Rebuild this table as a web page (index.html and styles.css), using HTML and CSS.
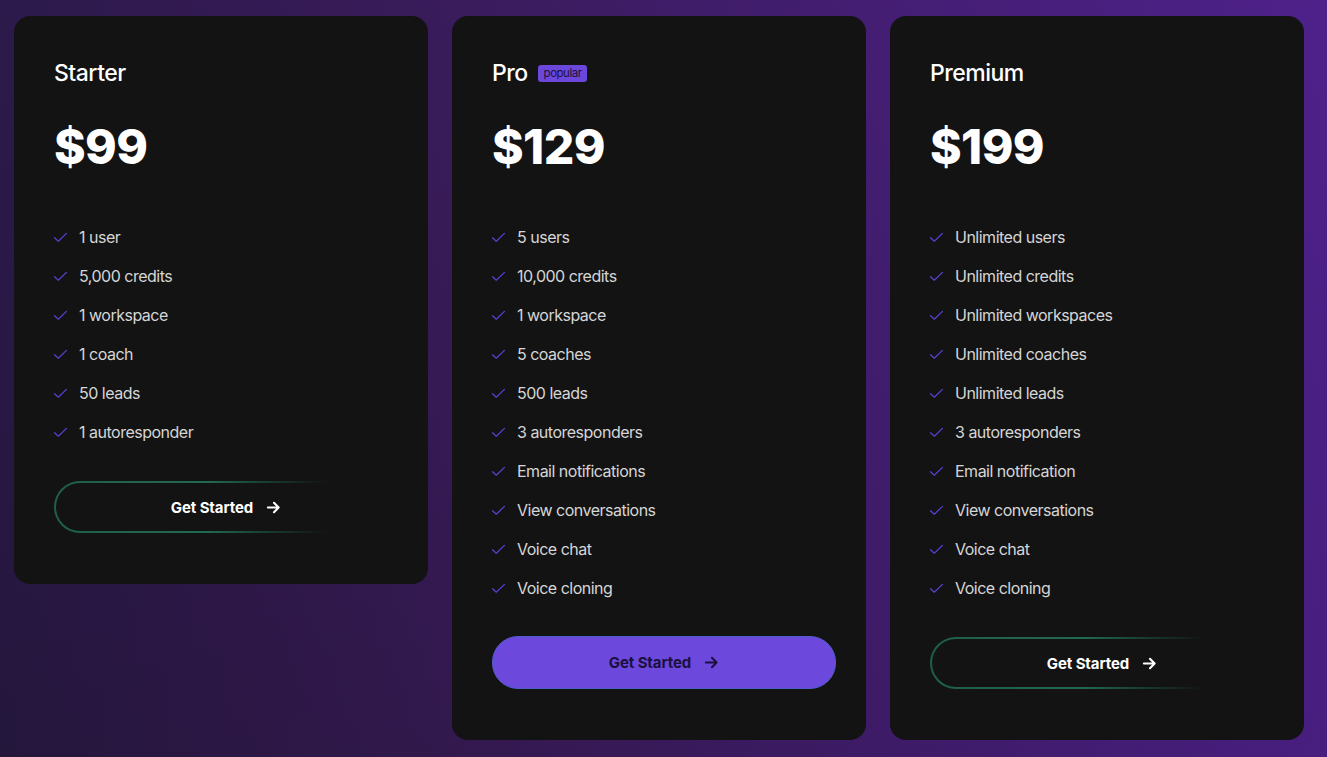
FILE: index.html
```html
<!DOCTYPE html>
<html lang="en">
<head>
<meta charset="utf-8">
<title>Pricing</title>
<link rel="stylesheet" href="styles.css">
</head>
<body>
<main class="pricing">
  <section class="card">
    <h2 class="plan">Starter</h2>
    <div class="price">$99</div>
    <ul class="features">
      <li><svg class="check" viewBox="0 0 16 12"><path d="M1.5 6.2 L5.6 10 L14.5 1.5"/></svg>1 user</li>
      <li><svg class="check" viewBox="0 0 16 12"><path d="M1.5 6.2 L5.6 10 L14.5 1.5"/></svg>5,000 credits</li>
      <li><svg class="check" viewBox="0 0 16 12"><path d="M1.5 6.2 L5.6 10 L14.5 1.5"/></svg>1 workspace</li>
      <li><svg class="check" viewBox="0 0 16 12"><path d="M1.5 6.2 L5.6 10 L14.5 1.5"/></svg>1 coach</li>
      <li><svg class="check" viewBox="0 0 16 12"><path d="M1.5 6.2 L5.6 10 L14.5 1.5"/></svg>50 leads</li>
      <li><svg class="check" viewBox="0 0 16 12"><path d="M1.5 6.2 L5.6 10 L14.5 1.5"/></svg>1 autoresponder</li>
    </ul>
    <a class="btn btn-outline" href="#">Get Started<svg class="arrow" viewBox="0 0 16 16"><path d="M2 8 H13.5 M8.5 3 L13.5 8 L8.5 13"/></svg></a>
  </section>

  <section class="card">
    <h2 class="plan">Pro <span class="badge">popular</span></h2>
    <div class="price">$129</div>
    <ul class="features">
      <li><svg class="check" viewBox="0 0 16 12"><path d="M1.5 6.2 L5.6 10 L14.5 1.5"/></svg>5 users</li>
      <li><svg class="check" viewBox="0 0 16 12"><path d="M1.5 6.2 L5.6 10 L14.5 1.5"/></svg>10,000 credits</li>
      <li><svg class="check" viewBox="0 0 16 12"><path d="M1.5 6.2 L5.6 10 L14.5 1.5"/></svg>1 workspace</li>
      <li><svg class="check" viewBox="0 0 16 12"><path d="M1.5 6.2 L5.6 10 L14.5 1.5"/></svg>5 coaches</li>
      <li><svg class="check" viewBox="0 0 16 12"><path d="M1.5 6.2 L5.6 10 L14.5 1.5"/></svg>500 leads</li>
      <li><svg class="check" viewBox="0 0 16 12"><path d="M1.5 6.2 L5.6 10 L14.5 1.5"/></svg>3 autoresponders</li>
      <li><svg class="check" viewBox="0 0 16 12"><path d="M1.5 6.2 L5.6 10 L14.5 1.5"/></svg>Email notifications</li>
      <li><svg class="check" viewBox="0 0 16 12"><path d="M1.5 6.2 L5.6 10 L14.5 1.5"/></svg>View conversations</li>
      <li><svg class="check" viewBox="0 0 16 12"><path d="M1.5 6.2 L5.6 10 L14.5 1.5"/></svg>Voice chat</li>
      <li><svg class="check" viewBox="0 0 16 12"><path d="M1.5 6.2 L5.6 10 L14.5 1.5"/></svg>Voice cloning</li>
    </ul>
    <a class="btn btn-filled" href="#">Get Started<svg class="arrow" viewBox="0 0 16 16"><path d="M2 8 H13.5 M8.5 3 L13.5 8 L8.5 13"/></svg></a>
  </section>

  <section class="card">
    <h2 class="plan">Premium</h2>
    <div class="price">$199</div>
    <ul class="features">
      <li><svg class="check" viewBox="0 0 16 12"><path d="M1.5 6.2 L5.6 10 L14.5 1.5"/></svg>Unlimited users</li>
      <li><svg class="check" viewBox="0 0 16 12"><path d="M1.5 6.2 L5.6 10 L14.5 1.5"/></svg>Unlimited credits</li>
      <li><svg class="check" viewBox="0 0 16 12"><path d="M1.5 6.2 L5.6 10 L14.5 1.5"/></svg>Unlimited workspaces</li>
      <li><svg class="check" viewBox="0 0 16 12"><path d="M1.5 6.2 L5.6 10 L14.5 1.5"/></svg>Unlimited coaches</li>
      <li><svg class="check" viewBox="0 0 16 12"><path d="M1.5 6.2 L5.6 10 L14.5 1.5"/></svg>Unlimited leads</li>
      <li><svg class="check" viewBox="0 0 16 12"><path d="M1.5 6.2 L5.6 10 L14.5 1.5"/></svg>3 autoresponders</li>
      <li><svg class="check" viewBox="0 0 16 12"><path d="M1.5 6.2 L5.6 10 L14.5 1.5"/></svg>Email notification</li>
      <li><svg class="check" viewBox="0 0 16 12"><path d="M1.5 6.2 L5.6 10 L14.5 1.5"/></svg>View conversations</li>
      <li><svg class="check" viewBox="0 0 16 12"><path d="M1.5 6.2 L5.6 10 L14.5 1.5"/></svg>Voice chat</li>
      <li><svg class="check" viewBox="0 0 16 12"><path d="M1.5 6.2 L5.6 10 L14.5 1.5"/></svg>Voice cloning</li>
    </ul>
    <a class="btn btn-outline" href="#">Get Started<svg class="arrow" viewBox="0 0 16 16"><path d="M2 8 H13.5 M8.5 3 L13.5 8 L8.5 13"/></svg></a>
  </section>
</main>
</body>
</html>
```

FILE: styles.css
```css
* { box-sizing: border-box; }

html, body {
  margin: 0;
  height: 100%;
}

body {
  font-family: Inter, "Noto Sans", sans-serif;
  color: #fff;
  background:
    linear-gradient(180deg, rgba(90, 40, 160, 0.12) 0%, rgba(0, 0, 0, 0.06) 100%),
    linear-gradient(90deg, #261840 0%, #2e1848 18%, #351a52 34%, #3f1c68 60%, #4c2087 100%);
  overflow: hidden;
}

.pricing {
  display: flex;
  align-items: flex-start;
  gap: 24px;
  padding: 16px 0 0 14px;
}

.card {
  width: 414px;
  flex: none;
  background: #131313;
  border-radius: 16px;
  padding: 40px 30px 51px 40px;
}

.plan {
  margin: 0;
  font-size: 23px;
  font-weight: 500;
  line-height: 34px;
  letter-spacing: -0.5px;
  display: flex;
  align-items: center;
  gap: 10px;
}

.badge {
  background: #6b47dc;
  color: #1c1240;
  font-size: 11.5px;
  font-weight: 400;
  line-height: 17px;
  padding: 0 6px;
  border-radius: 3px;
  letter-spacing: -0.5px;
}

.price {
  margin-top: 27px;
  font-size: 48px;
  font-weight: 800;
  line-height: 60px;
  letter-spacing: -0.6px;
}

.features {
  list-style: none;
  margin: 48px 0 0;
  padding: 0;
  display: flex;
  flex-direction: column;
  gap: 15px;
}

.features li {
  display: flex;
  align-items: center;
  gap: 11px;
  font-size: 16px;
  line-height: 24px;
  color: #d6d6d6;
  letter-spacing: -0.5px;
}

.check {
  width: 15px;
  height: 11px;
  margin-left: -1px;
  fill: none;
  stroke: #5a3fcf;
  stroke-width: 1.4;
  stroke-linecap: round;
  stroke-linejoin: round;
}

.btn {
  margin-top: 37px;
  width: 344px;
  height: 52px;
  border-radius: 26px;
  display: flex;
  align-items: center;
  justify-content: center;
  gap: 13px;
  font-size: 15px;
  font-weight: 700;
  text-decoration: none;
  letter-spacing: -0.1px;
}

.btn .arrow {
  width: 15px;
  height: 15px;
  fill: none;
  stroke: currentColor;
  stroke-width: 2.2;
  stroke-linecap: round;
  stroke-linejoin: round;
}

.btn-outline {
  color: #fff;
  border: 2px solid transparent;
  background:
    linear-gradient(#131313, #131313) padding-box,
    linear-gradient(90deg, #1e5f47 0%, #206a50 45%, rgba(32, 106, 80, 0.4) 65%, rgba(32, 106, 80, 0) 80%) border-box;
}

.btn-filled {
  color: #1b1140;
  background: #6c48dc;
  border: 1px solid #4f5fc8;
  height: 53px;
  margin-top: 36px;
}
```
